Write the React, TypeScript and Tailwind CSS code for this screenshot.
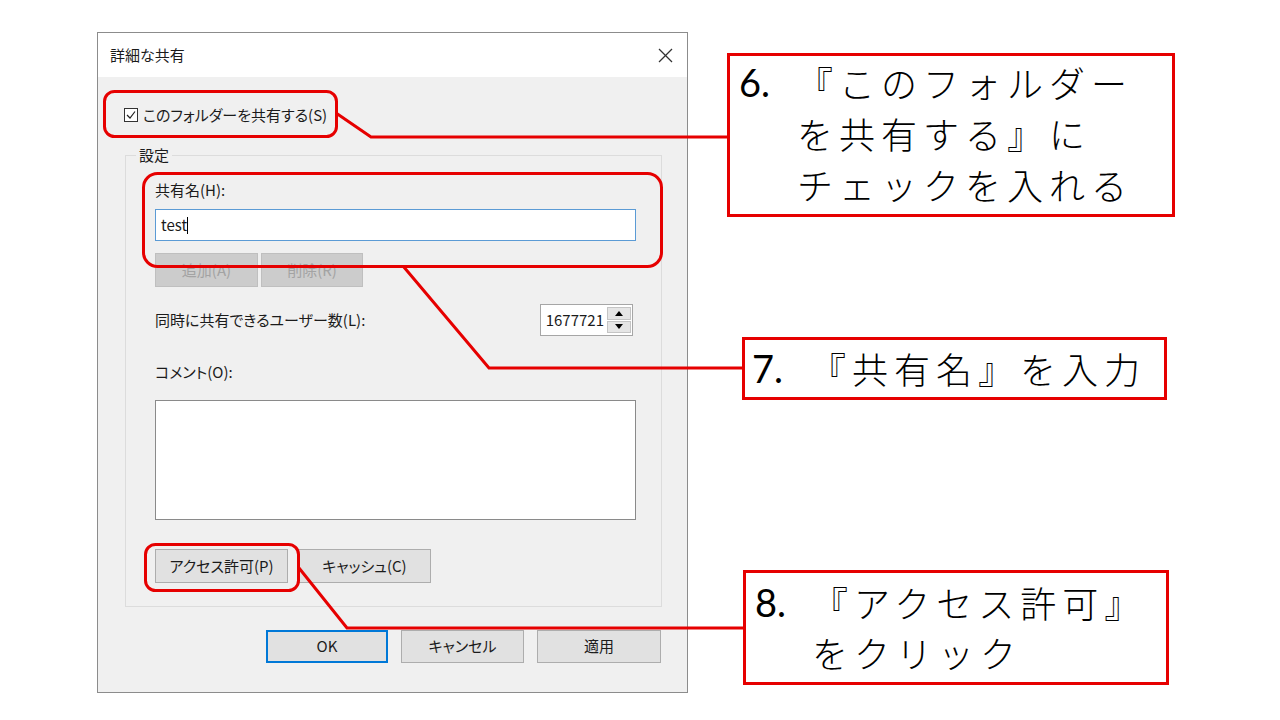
import type { ReactNode } from 'react';

function WinButton({ children, className = '' }: { children: ReactNode; className?: string }) {
  return (
    <div className={`flex items-center justify-center border border-[#adadad] bg-[#e1e1e1] ${className}`}>
      {children}
    </div>
  );
}

function Dialog() {
  return (
    <div className="ml-[97px] mt-[32px] flex h-[661px] w-[591px] shrink-0 flex-col border border-[#8c8c8c] bg-[#f0f0f0] font-['Noto_Sans_CJK_JP',sans-serif] text-[15px] text-[#1b1b1b] [font-feature-settings:'palt']">
      {/* Title bar */}
      <div className="flex h-[44px] shrink-0 items-center justify-between bg-white pl-[12px] pr-[14px]">
        <span>詳細な共有</span>
        <svg width="15" height="15" viewBox="0 0 15 15" stroke="#333" strokeWidth="1.2">
          <line x1="1" y1="1" x2="14" y2="14" />
          <line x1="14" y1="1" x2="1" y2="14" />
        </svg>
      </div>

      <div className="flex flex-1 flex-col pl-[26px] pr-[25px]">
        {/* Share checkbox */}
        <div className="mt-[28px] flex h-[20px] items-center gap-[5px]">
          <div className="flex h-[14px] w-[14px] items-center justify-center border border-[#333] bg-white">
            <svg width="12" height="12" viewBox="0 0 12 12" fill="none" stroke="#222" strokeWidth="1.2">
              <polyline points="2,6 5,9 10,2.5" />
            </svg>
          </div>
          <span>このフォルダーを共有する(S)</span>
        </div>

        {/* Settings group */}
        <fieldset className="ml-[1px] mt-[20px] border border-[#dcdcdc] pb-[23px] pl-[29px] pr-[25px]">
          <legend className="-ml-[19px] px-[3px] leading-[20px]">設定</legend>

          <div className="mt-[15px] leading-[20px]">共有名(H):</div>
          <div className="mt-[9px] flex h-[32px] items-center border border-[#5b9bd5] bg-white pl-[5px]">
            <span>test</span>
            <span className="h-[17px] w-px bg-black" />
          </div>

          <div className="mt-[12px] flex gap-[3px]">
            <div className="flex h-[34px] w-[103px] items-center justify-center border border-[#bfbfbf] bg-[#cccccc] text-[#a3a3a3]">
              追加(A)
            </div>
            <div className="flex h-[34px] w-[102px] items-center justify-center border border-[#bfbfbf] bg-[#cccccc] text-[#a3a3a3]">
              削除(R)
            </div>
          </div>

          <div className="mt-[17px] flex h-[32px] items-center justify-between">
            <span>同時に共有できるユーザー数(L):</span>
            <div className="mr-[3px] flex h-[32px] w-[93px] border border-[#a6a6a6] bg-white">
              <div className="flex flex-1 items-center justify-end pr-[3px]">1677721</div>
              <div className="flex w-[25px] flex-col gap-[1px] py-[2px] pr-[1px]">
                <div className="flex flex-1 items-center justify-center border border-[#c4c4c4] bg-[#e5e5e5]">
                  <svg width="8" height="5" viewBox="0 0 8 5">
                    <polygon points="0,5 8,5 4,0" fill="#000" />
                  </svg>
                </div>
                <div className="flex flex-1 items-center justify-center border border-[#c4c4c4] bg-[#e5e5e5]">
                  <svg width="8" height="5" viewBox="0 0 8 5">
                    <polygon points="0,0 8,0 4,5" fill="#000" />
                  </svg>
                </div>
              </div>
            </div>
          </div>

          <div className="mt-[26px] leading-[20px]">コメント(O):</div>
          <div className="mt-[18px] h-[120px] border border-[#8a8a8a] bg-white" />

          <div className="mt-[29px] flex gap-[10px]">
            <WinButton className="h-[34px] w-[133px]">アクセス許可(P)</WinButton>
            <WinButton className="h-[34px] w-[133px]">キャッシュ(C)</WinButton>
          </div>
        </fieldset>

        {/* Dialog buttons */}
        <div className="mr-[1px] mt-[23px] flex justify-end gap-[13px]">
          <div className="flex h-[33px] w-[122px] items-center justify-center border-2 border-[#0078d7] bg-[#e1e1e1]">
            OK
          </div>
          <WinButton className="h-[33px] w-[123px]">キャンセル</WinButton>
          <WinButton className="h-[33px] w-[124px]">適用</WinButton>
        </div>
      </div>
    </div>
  );
}

function Callouts() {
  const jp = "font-['Noto_Sans_CJK_JP',sans-serif] text-[36px] font-light tracking-[6px] whitespace-nowrap";
  const num = "font-['Lato','Liberation_Sans',sans-serif] text-[38px]";
  return (
    <div className="flex flex-col items-start text-black">
      {/* 6 */}
      <div className="ml-[39px] mt-[53px] flex h-[164px] w-[448px] border-[3px] border-[#e60000] pl-[9px] leading-[51px]">
        <div className="mt-[1px] flex">
          <span className={`${num} w-[58px] shrink-0`}>6.</span>
          <span className={jp}>
            『このフォルダー
            <br />
            を共有する』に
            <br />
            チェックを入れる
          </span>
        </div>
      </div>

      {/* 7 */}
      <div className="ml-[54px] mt-[120px] flex h-[63px] w-[425px] items-center border-[3px] border-[#e60000] pl-[7px] leading-[55px]">
        <span className={`${num} w-[58px] shrink-0`}>7.</span>
        <span className={jp}>『共有名』を入力</span>
      </div>

      {/* 8 */}
      <div className="ml-[55px] mt-[170px] flex h-[115px] w-[426px] border-[3px] border-[#e60000] pl-[9px] pt-[4px] leading-[50px]">
        <span className={`${num} w-[57px] shrink-0`}>8.</span>
        <span className={jp}>
          『アクセス許可』
          <br />
          をクリック
        </span>
      </div>
    </div>
  );
}

export default function App() {
  return (
    <div className="relative h-[720px] w-[1280px] overflow-hidden bg-white">
      <div className="flex items-start">
        <Dialog />
        <Callouts />
      </div>

      {/* highlight frames and leader lines */}
      <svg
        className="pointer-events-none absolute left-0 top-0"
        width="1280"
        height="720"
        fill="none"
        stroke="#e60000"
        strokeWidth="3"
      >
        <rect x="104.5" y="91.5" width="232" height="45" rx="10" />
        <rect x="143.5" y="173.5" width="518" height="93" rx="14" />
        <rect x="145.5" y="544.5" width="153" height="46" rx="10" />
        <polyline points="336,113 371,137 728,137" />
        <polyline points="403,266 489,368 742,368" />
        <polyline points="299,568 347,628 743,628" />
      </svg>
    </div>
  );
}
